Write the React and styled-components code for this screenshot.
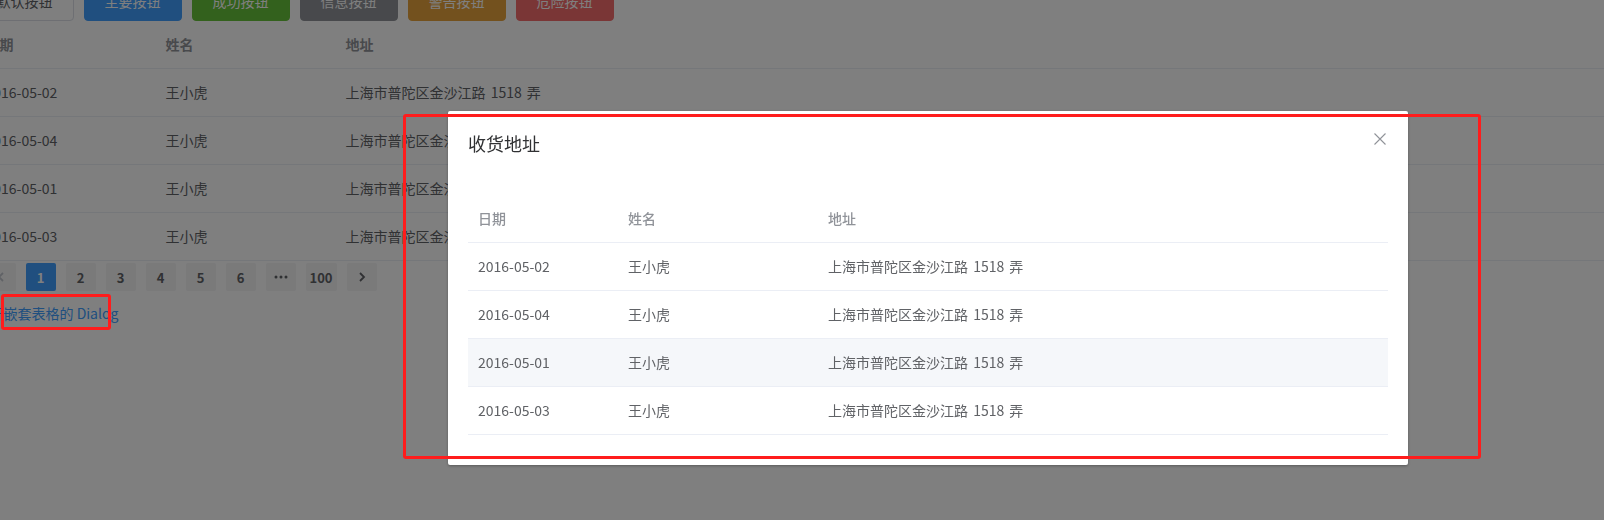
import styled, { createGlobalStyle } from 'styled-components';

const GlobalStyle = createGlobalStyle`
  html, body {
    margin: 0;
    padding: 0;
    overflow: hidden;
    background: #fff;
    font-family: "Noto Sans CJK SC", "Noto Sans", sans-serif;
    font-size: 14px;
    color: #606266;
  }
  * { box-sizing: border-box; }
`;

const rows = [
  { date: '2016-05-02', name: '王小虎', address: '上海市普陀区金沙江路 1518 弄' },
  { date: '2016-05-04', name: '王小虎', address: '上海市普陀区金沙江路 1518 弄' },
  { date: '2016-05-01', name: '王小虎', address: '上海市普陀区金沙江路 1518 弄' },
  { date: '2016-05-03', name: '王小虎', address: '上海市普陀区金沙江路 1518 弄' },
];

const buttons = [
  { label: '默认按钮', kind: 'default' },
  { label: '主要按钮', kind: 'primary' },
  { label: '成功按钮', kind: 'success' },
  { label: '信息按钮', kind: 'info' },
  { label: '警告按钮', kind: 'warning' },
  { label: '危险按钮', kind: 'danger' },
];

const btnColors = {
  default: { bg: '#fff', border: '#dcdfe6', color: '#606266' },
  primary: { bg: '#409eff', border: '#409eff', color: '#fff' },
  success: { bg: '#67c23a', border: '#67c23a', color: '#fff' },
  info: { bg: '#909399', border: '#909399', color: '#fff' },
  warning: { bg: '#e6a23c', border: '#e6a23c', color: '#fff' },
  danger: { bg: '#f56c6c', border: '#f56c6c', color: '#fff' },
};

const pages = ['1', '2', '3', '4', '5', '6', 'more', '100'];

const Chevron = ({ dir }) => (
  <svg width="12" height="12" viewBox="0 0 12 12">
    <polyline
      points={dir === 'left' ? '8,2 4,6 8,10' : '4,2 8,6 4,10'}
      fill="none"
      stroke="currentColor"
      strokeWidth="1.8"
    />
  </svg>
);

const MoreDots = () => (
  <svg width="14" height="4" viewBox="0 0 14 4">
    <circle cx="2" cy="2" r="1.5" fill="currentColor" />
    <circle cx="7" cy="2" r="1.5" fill="currentColor" />
    <circle cx="12" cy="2" r="1.5" fill="currentColor" />
  </svg>
);

const CloseIcon = () => (
  <svg width="16" height="16" viewBox="0 0 16 16">
    <path d="M2.5 2.5 L13.5 13.5 M13.5 2.5 L2.5 13.5" stroke="#909399" strokeWidth="1.1" fill="none" />
  </svg>
);

const DataTable = ({ widths, hoverRow, boldHead }) => (
  <Table>
    <colgroup>
      {widths.map((w, i) => (
        <col key={i} style={w ? { width: w } : undefined} />
      ))}
    </colgroup>
    <thead>
      <tr>
        <Th $bold={boldHead}><Cell>日期</Cell></Th>
        <Th $bold={boldHead}><Cell>姓名</Cell></Th>
        <Th $bold={boldHead}><Cell>地址</Cell></Th>
      </tr>
    </thead>
    <tbody>
      {rows.map((r, i) => (
        <Tr key={i} $hover={i === hoverRow}>
          <Td><Cell>{r.date}</Cell></Td>
          <Td><Cell>{r.name}</Cell></Td>
          <Td><Cell>{r.address}</Cell></Td>
        </Tr>
      ))}
    </tbody>
  </Table>
);

const App = () => {
  return (
    <>
      <GlobalStyle />
      <Page>
        <ButtonRow>
          {buttons.map((b) => (
            <Button key={b.kind} $kind={b.kind}>{b.label}</Button>
          ))}
        </ButtonRow>
        <DataTable widths={[180, 180, null]} hoverRow={-1} boldHead />
        <Pager>
          <PageBtn $disabled><Chevron dir="left" /></PageBtn>
          {pages.map((p) => (
            <PageBtn key={p} $active={p === '1'}>
              {p === 'more' ? <MoreDots /> : p}
            </PageBtn>
          ))}
          <PageBtn><Chevron dir="right" /></PageBtn>
        </Pager>
        <TextButton>打开嵌套表格的 Dialog</TextButton>
      </Page>

      <Overlay />

      <Dialog>
        <DialogHeader>
          <DialogTitle>收货地址</DialogTitle>
          <CloseBtn><CloseIcon /></CloseBtn>
        </DialogHeader>
        <DialogBody>
          <DataTable widths={[150, 200, null]} hoverRow={2} />
        </DialogBody>
      </Dialog>

      <Annotation $left={403} $top={114} $width={1078} $height={345} />
      <Annotation $left={1} $top={294} $width={110} $height={36} />
    </>
  );
};

export default App;

const Page = styled.div`
  margin: -19px 0 0 -24.5px;
  width: calc(100% + 24.5px);
`;

const ButtonRow = styled.div`
  display: flex;
  gap: 10px;
`;

const Button = styled.button`
  height: 40px;
  padding: 12px 20px;
  font-family: inherit;
  font-size: 14px;
  line-height: 1;
  border-radius: 4px;
  border: 1px solid ${(p) => btnColors[p.$kind].border};
  background: ${(p) => btnColors[p.$kind].bg};
  color: ${(p) => btnColors[p.$kind].color};
  white-space: nowrap;
`;

const Table = styled.table`
  width: 100%;
  border-collapse: collapse;
  table-layout: fixed;
  font-size: 14px;
  color: #606266;
  word-spacing: 2px;
`;

const Th = styled.th`
  padding: 12px 0;
  text-align: left;
  color: #909399;
  font-weight: ${(p) => (p.$bold ? 700 : 500)};
  border-bottom: 1px solid #ebeef5;
`;

const Tr = styled.tr`
  background: ${(p) => (p.$hover ? '#f5f7fa' : 'transparent')};
`;

const Td = styled.td`
  padding: 12px 0;
  border-bottom: 1px solid #ebeef5;
`;

const Cell = styled.div`
  padding: 0 10px;
  line-height: 23px;
  white-space: nowrap;
  overflow: hidden;
`;

const Pager = styled.div`
  display: flex;
  padding: 2px 5px;
`;

const PageBtn = styled.div`
  min-width: 30px;
  height: 28px;
  margin: 0 5px;
  padding: 0 4px;
  border-radius: 2px;
  display: flex;
  align-items: center;
  justify-content: center;
  font-size: 13px;
  font-weight: 700;
  background: ${(p) => (p.$active ? '#409eff' : '#f4f4f5')};
  color: ${(p) => (p.$active ? '#fff' : p.$disabled ? '#c0c4cc' : '#606266')};
`;

const TextButton = styled.button`
  display: block;
  padding: 12px 0;
  border: none;
  background: none;
  font-family: inherit;
  font-size: 14px;
  line-height: 1;
  height: 40px;
  color: #409eff;
`;

const Overlay = styled.div`
  position: fixed;
  inset: 0;
  background: rgba(0, 0, 0, 0.5);
`;

const Dialog = styled.div`
  position: fixed;
  left: 448px;
  top: 111px;
  width: 960px;
  background: #fff;
  border-radius: 2px;
  box-shadow: 0 1px 3px rgba(0, 0, 0, 0.3);
`;

const DialogHeader = styled.div`
  position: relative;
  padding: 20px 20px 10px;
`;

const DialogTitle = styled.span`
  display: block;
  font-size: 18px;
  line-height: 24px;
  color: #303133;
`;

const CloseBtn = styled.div`
  position: absolute;
  top: 20px;
  right: 20px;
  width: 16px;
  height: 16px;
  display: flex;
`;

const DialogBody = styled.div`
  padding: 30px 20px;
`;

const Annotation = styled.div`
  position: fixed;
  left: ${(p) => p.$left}px;
  top: ${(p) => p.$top}px;
  width: ${(p) => p.$width}px;
  height: ${(p) => p.$height}px;
  border: 3px solid #ff1c1c;
  border-radius: 3px;
  pointer-events: none;
`;
